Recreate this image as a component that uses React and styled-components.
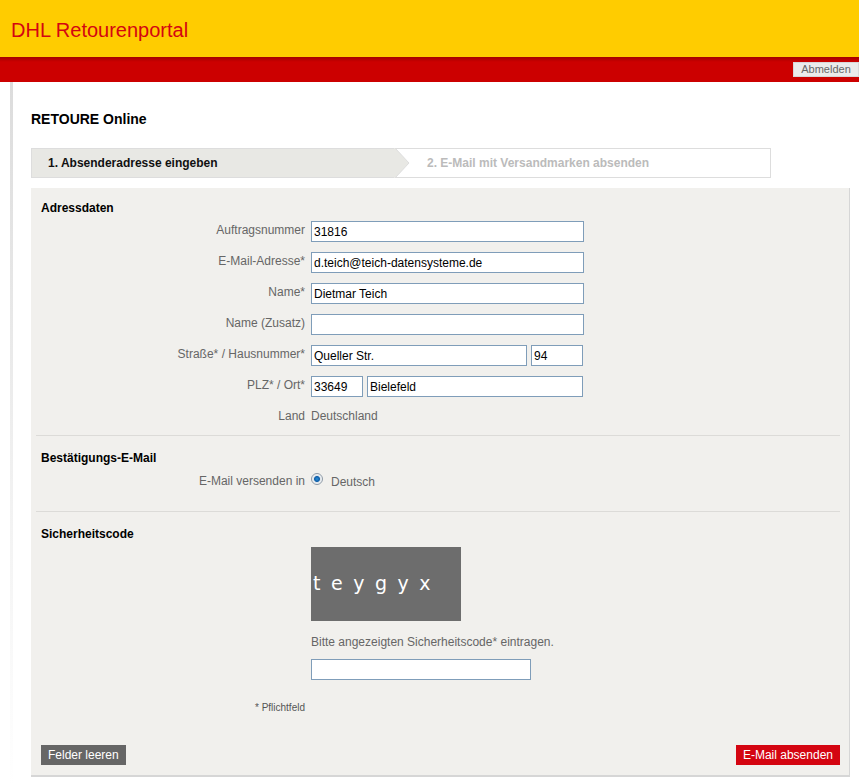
import React from 'react'
import styled, { createGlobalStyle } from 'styled-components'

const Global = createGlobalStyle`
  body {
    margin: 0;
    background: #fff;
    font-family: "Liberation Sans", Arial, sans-serif;
  }
`;

const Header = styled.div`
  height: 57px;
  background: #ffcc00;
  display: flex;
  align-items: center;
  padding-left: 11px;
`;
const Brand = styled.h1`
  margin: 0;
  font-size: 20px;
  font-weight: normal;
  color: #d40511;
  position: relative;
  top: 2px;
`;
const RedBar = styled.div`
  height: 25px;
  background: linear-gradient(#a30000 0, #cc0000 5px, #cc0000 100%);
  display: flex;
  justify-content: flex-end;
  align-items: flex-start;
  padding-top: 5px;
  box-sizing: border-box;
`;
const Logout = styled.button`
  height: 15px;
  width: 66px;
  padding: 0;
  border: 1px solid #d8d8d8;
  background: #ebebeb;
  color: #666;
  font-family: inherit;
  font-size: 11px;
  line-height: 13px;
`;

const Page = styled.div`
  margin-left: 10px;
  border-left: 3px solid;
  border-image: linear-gradient(#dcdcdc, #f2f2f2 60%, #fff) 1;
  padding: 28px 9px 10px 18px;
`;
const PageTitle = styled.h2`
  margin: 0 0 20px;
  font-size: 14px;
  line-height: 18px;
  font-weight: bold;
  color: #000;
`;

const Steps = styled.div`
  display: flex;
  width: 740px;
  height: 30px;
`;
const Step = styled.div`
  position: relative;
  box-sizing: border-box;
  display: flex;
  align-items: center;
  font-size: 12px;
  font-weight: bold;
  border: 1px solid #ddd;
  ${p => p.$active ? `
    width: 364px;
    background: #e8e8e4;
    border-right: none;
    color: #111;
    padding-left: 16px;
    z-index: 1;
  ` : `
    flex: 1;
    background: #fff;
    color: #bbb;
    padding-left: 31px;
  `}
`;
const Arrow = styled.svg`
  position: absolute;
  top: -1px;
  right: -15px;
`;

const Panel = styled.div`
  margin-top: 10px;
  background: #f1f0ed;
  border-right: 1px solid #d6d6d6;
  border-bottom: 2px solid #d6d6d6;
  padding: 0 9px 10px 5px;
`;
const Section = styled.div`
  padding: ${p => p.$top ?? 12}px 0 ${p => p.$bottom ?? 12}px 5px;
  border-bottom: ${p => p.$last ? 'none' : '1px solid #dcdbd8'};
`;
const SectionTitle = styled.h3`
  margin: 0 0 6px;
  font-size: 12px;
  line-height: 14px;
  font-weight: bold;
  color: #000;
`;
const Rows = styled.div`
  display: flex;
  flex-direction: column;
  gap: 10px;
`;
const Row = styled.div`
  display: grid;
  grid-template-columns: 264px 273px;
  column-gap: 6px;
  align-items: start;
  min-height: ${p => p.$h || 21}px;
`;
const Label = styled.label`
  text-align: right;
  font-size: 12px;
  line-height: 14px;
  color: #666;
  padding-top: ${p => p.$pt ?? 2}px;
`;
const Fields = styled.div`
  display: flex;
  gap: 4px;
`;
const Input = styled.input`
  box-sizing: border-box;
  width: ${p => p.$w || 273}px;
  height: 21px;
  border: 1px solid #7f9db9;
  background: #fff;
  padding: 0 2px;
  font-family: inherit;
  font-size: 12px;
  color: #000;
  outline: none;
`;
const Value = styled.span`
  font-size: 12px;
  line-height: 14px;
  color: #666;
  padding-top: ${p => p.$pt ?? 1}px;
`;
const RadioLine = styled.label`
  display: flex;
  align-items: center;
  gap: 8px;
  font-size: 12px;
  color: #666;
`;
const Radio = styled.span`
  width: 12px;
  height: 12px;
  box-sizing: border-box;
  border-radius: 50%;
  border: 1px solid #8e9aa6;
  background: radial-gradient(circle, #2a8fd8 0, #0f5ea8 2.5px, #dfe5ea 3.5px, #fff 6px);
  margin-top: -2px;
`;
const Captcha = styled.div`
  width: 150px;
  height: 74px;
  background: #6d6d6d;
  color: #fff;
  font-family: "DejaVu Sans", sans-serif;
  font-size: 19px;
  letter-spacing: 10.5px;
  line-height: 72px;
  text-indent: 2px;
  overflow: hidden;
  white-space: nowrap;
`;
const CodeBlock = styled.div`
  margin-left: 270px;
  display: flex;
  flex-direction: column;
`;
const Hint = styled.p`
  margin: 14px 0 10px;
  font-size: 12px;
  line-height: 14px;
  color: #666;
`;
const Required = styled.div`
  width: 264px;
  text-align: right;
  font-size: 10px;
  color: #555;
  margin-top: 22px;
`;
const Actions = styled.div`
  display: flex;
  justify-content: space-between;
  margin-top: 32px;
  padding-left: 5px;
`;
const Button = styled.button`
  height: 20px;
  padding: 0 7px;
  border: none;
  background: ${p => p.$primary ? '#d40511' : '#666'};
  color: #fff;
  font-family: inherit;
  font-size: 12px;
`;

const App = () => {
  return (
    <>
      <Global />
      <Header>
        <Brand>DHL Retourenportal</Brand>
      </Header>
      <RedBar>
        <Logout>Abmelden</Logout>
      </RedBar>
      <Page>
        <PageTitle>RETOURE Online</PageTitle>
        <Steps>
          <Step $active>
            1. Absenderadresse eingeben
            <Arrow width="16" height="30" viewBox="0 0 16 30">
              <polygon points="0,0 1,0 15,15 1,30 0,30" fill="#e8e8e4" />
              <polyline points="1,0 15,15 1,30" fill="none" stroke="#ddd" />
            </Arrow>
          </Step>
          <Step>2. E-Mail mit Versandmarken absenden</Step>
        </Steps>
        <Panel>
          <Section $top={13}>
            <SectionTitle>Adressdaten</SectionTitle>
            <Rows>
              <Row>
                <Label>Auftragsnummer</Label>
                <Input defaultValue="31816" />
              </Row>
              <Row>
                <Label>E-Mail-Adresse*</Label>
                <Input defaultValue="d.teich@teich-datensysteme.de" />
              </Row>
              <Row>
                <Label>Name*</Label>
                <Input defaultValue="Dietmar Teich" />
              </Row>
              <Row>
                <Label>Name (Zusatz)</Label>
                <Input defaultValue="" />
              </Row>
              <Row>
                <Label>Straße* / Hausnummer*</Label>
                <Fields>
                  <Input $w={216} defaultValue="Queller Str." />
                  <Input $w={52} defaultValue="94" />
                </Fields>
              </Row>
              <Row>
                <Label>PLZ* / Ort*</Label>
                <Fields>
                  <Input $w={52} defaultValue="33649" />
                  <Input $w={216} defaultValue="Bielefeld" />
                </Fields>
              </Row>
              <Row $h={16}>
                <Label $pt={2}>Land</Label>
                <Value $pt={2}>Deutschland</Value>
              </Row>
            </Rows>
          </Section>
          <Section $top={15} $bottom={22}>
            <SectionTitle>Bestätigungs-E-Mail</SectionTitle>
            <Row $h={16}>
              <Label $pt={3}>E-Mail versenden in</Label>
              <RadioLine>
                <Radio />
                <Value $pt={4}>Deutsch</Value>
              </RadioLine>
            </Row>
          </Section>
          <Section $top={15} $bottom={0} $last>
            <SectionTitle>Sicherheitscode</SectionTitle>
            <CodeBlock>
              <Captcha>teygyx</Captcha>
              <Hint>Bitte angezeigten Sicherheitscode* eintragen.</Hint>
              <Input $w={220} />
            </CodeBlock>
            <Required>* Pflichtfeld</Required>
          </Section>
          <Actions>
            <Button>Felder leeren</Button>
            <Button $primary>E-Mail absenden</Button>
          </Actions>
        </Panel>
      </Page>
    </>
  )
}

export default App
